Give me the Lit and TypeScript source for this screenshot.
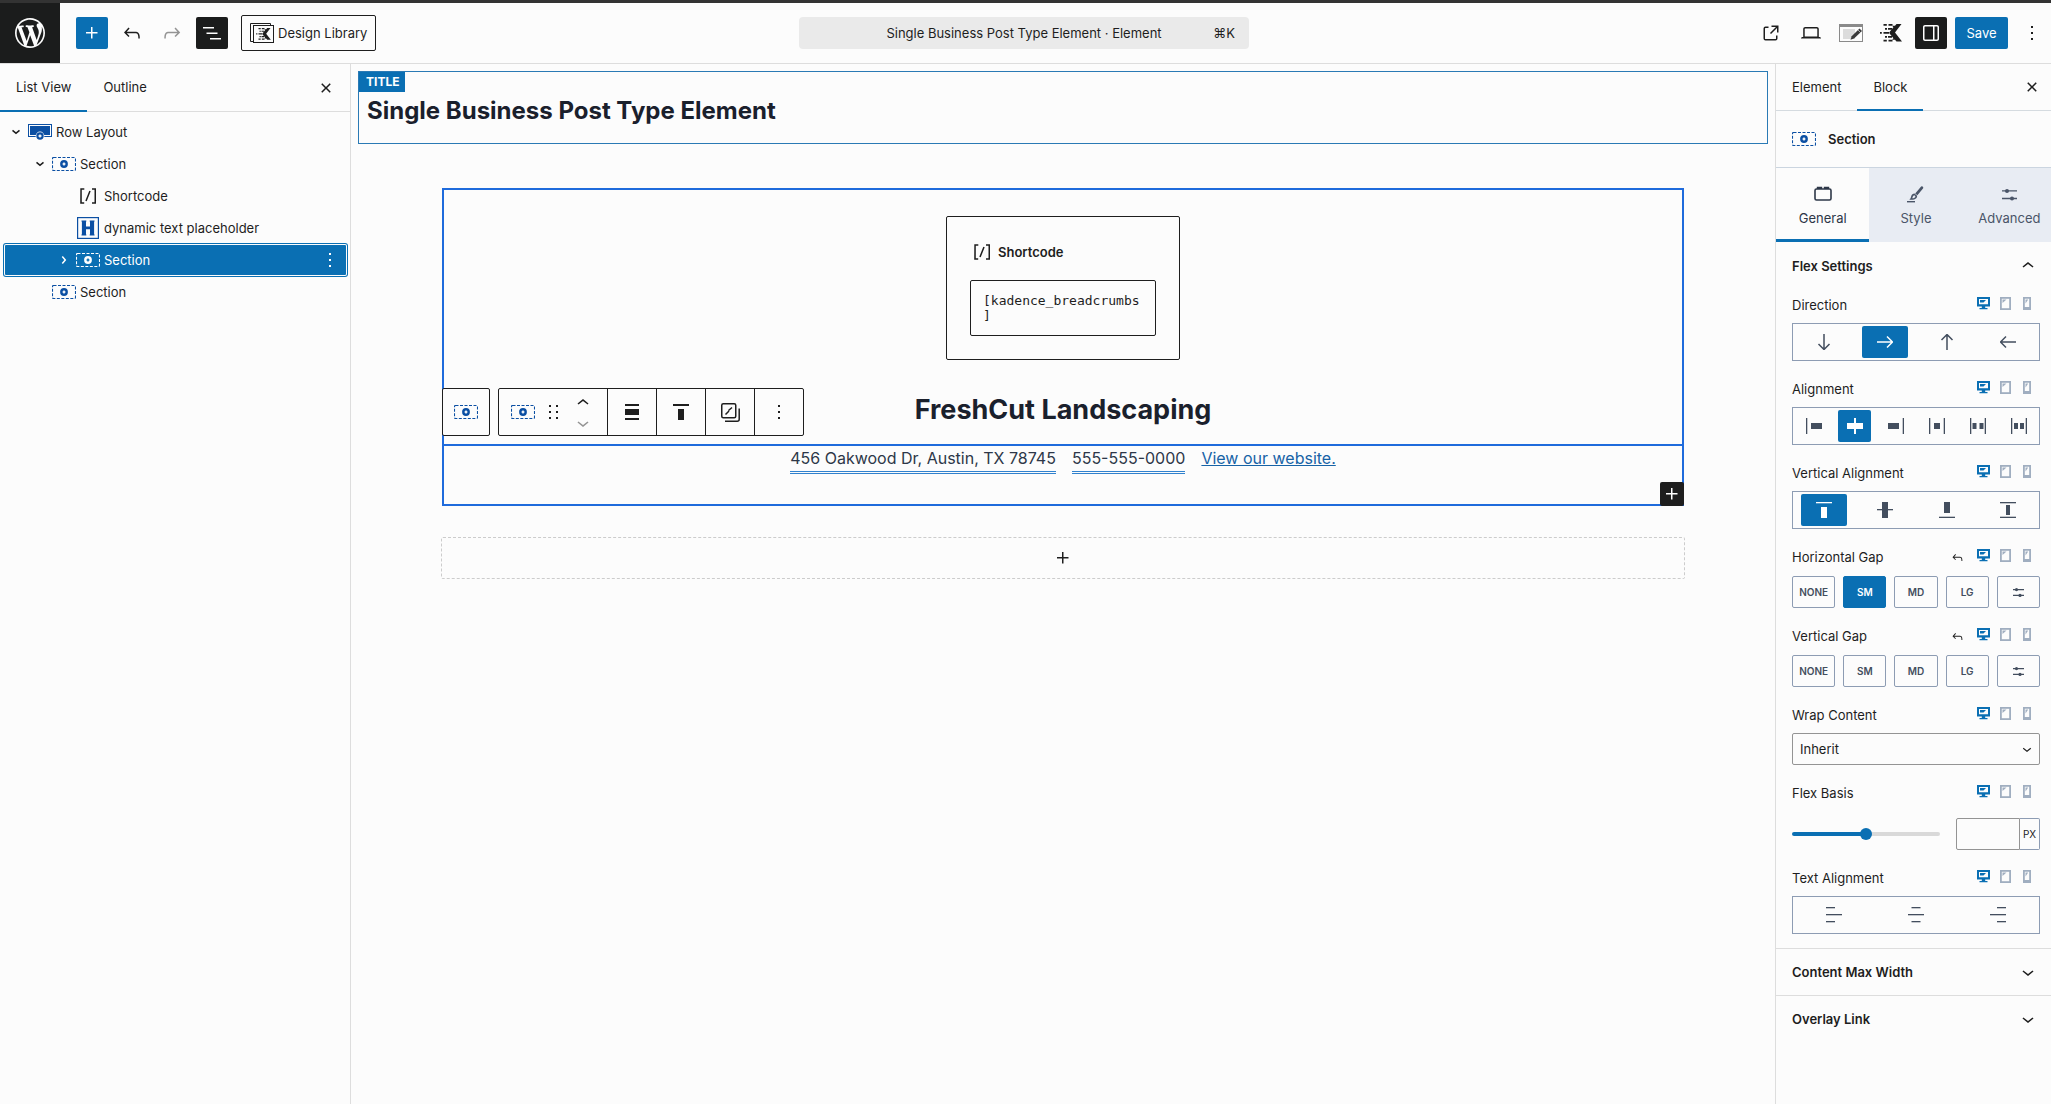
import { LitElement, html, css, svg, nothing, TemplateResult, SVGTemplateResult } from 'lit';
import { customElement, property, state } from 'lit/decorators.js';
import { classMap } from 'lit/directives/class-map.js';

const icon = (body: SVGTemplateResult, w = 24, h = w, box = `0 0 ${w} ${h}`): TemplateResult =>
  html`<svg width=${w} height=${h} viewBox=${box} fill="currentColor" aria-hidden="true">${body}</svg>`;
const path = (d: string) => svg`<path d=${d}></path>`;
const rect = (x: number, y: number, w: number, h: number) => svg`<rect x=${x} y=${y} width=${w} height=${h}></rect>`;

const wordpress = icon(
  path(
    'M20 10c0-5.51-4.49-10-10-10C4.48 0 0 4.49 0 10c0 5.52 4.48 10 10 10 5.51 0 10-4.48 10-10zM7.78 15.37L4.37 6.22c.55-.02 1.17-.08 1.17-.08.5-.06.44-1.13-.06-1.11 0 0-1.45.11-2.37.11-.18 0-.37 0-.58-.01C4.12 2.69 6.87 1.11 10 1.11c2.33 0 4.45.87 6.05 2.34-.68-.11-1.65.39-1.65 1.58 0 .74.45 1.36.9 2.1.35.61.55 1.36.55 2.46 0 1.49-1.4 5-1.4 5l-3.03-8.37c.54-.02.82-.17.82-.17.5-.05.44-1.25-.06-1.22 0 0-1.44.12-2.38.12-.87 0-2.33-.12-2.33-.12-.5-.03-.56 1.2-.06 1.22l.92.08 1.26 3.41zM17.41 10c.24-.64.74-1.87.43-4.25.7 1.29 1.05 2.71 1.05 4.25 0 3.29-1.73 6.24-4.4 7.78.97-2.59 1.94-5.2 2.92-7.78zM6.1 18.09C3.12 16.65 1.11 13.53 1.11 10c0-1.3.23-2.48.72-3.59C3.25 10.3 4.67 14.2 6.1 18.09zm4.03-6.63l2.58 6.98c-.86.29-1.76.45-2.71.45-.79 0-1.57-.11-2.29-.33.81-2.38 1.62-4.74 2.42-7.1z'
  ),
  36,
  36,
  '-2 -2 24 24'
);
const plus = icon(path('M11 12.5V17.5H12.5V12.5H17.5V11H12.5V6H11V11H6V12.5H11Z'));
const undoPath = path(
  'M18.3 11.7c-.6-.6-1.4-.9-2.3-.9H6.7l2.9-3.3-1.1-1-4.5 5L8.5 16l1-1-2.7-2.7H16c.5 0 .9.2 1.3.5 1 1 1 3.4 1 4.5v.3h1.5v-.2c0-1.5 0-4.3-1.5-5.7z'
);
const undo = icon(undoPath);
const undoSmall = icon(undoPath, 15, 15, '0 0 24 24');
const redo = icon(
  path(
    'M15.6 6.5l-1.1 1 2.9 3.3H8c-.9 0-1.7.3-2.3.9-1.4 1.5-1.4 4.2-1.4 5.6v.2h1.5v-.3c0-1.1 0-3.5 1-4.5.3-.3.7-.5 1.3-.5h9.2L14.5 15l1.1 1.1 4.6-4.6-4.6-5z'
  )
);
const listView = icon(path('M3 6h11v1.5H3V6Zm3.5 5.5h11V13h-11v-1.5ZM21 17H10v1.5h11V17Z'));
const external = icon(
  path(
    'M19.5 4.5h-7V6h4.44l-5.97 5.97 1.06 1.06L18 7.06v4.44h1.5v-7Zm-13 1a2 2 0 0 0-2 2v10a2 2 0 0 0 2 2h10a2 2 0 0 0 2-2v-3H17v3a.5.5 0 0 1-.5.5h-10a.5.5 0 0 1-.5-.5v-10a.5.5 0 0 1 .5-.5h3V5.5h-3Z'
  )
);
const laptop = icon(
  path(
    'M20.5 16h-.7V8c0-1.1-.9-2-2-2H6.2c-1.1 0-2 .9-2 2v8h-.7c-.8 0-1.5.7-1.5 1.5h20c0-.8-.7-1.5-1.5-1.5zM5.7 8c0-.3.2-.5.5-.5h11.6c.3 0 .5.2.5.5v7.6H5.7V8z'
  )
);
const drawer = icon(
  path(
    'M18 4H6c-1.1 0-2 .9-2 2v12c0 1.1.9 2 2 2h12c1.1 0 2-.9 2-2V6c0-1.1-.9-2-2-2zm-4 14.5H6c-.3 0-.5-.2-.5-.5V6c0-.3.2-.5.5-.5h8v13zm4.5-.5c0 .3-.2.5-.5.5h-2.5v-13H18c.3 0 .5.2.5.5v12z'
  )
);
const dots = icon(path('M13 19h-2v-2h2v2zm0-6h-2v-2h2v2zm0-6h-2V5h2v2z'));
const close = icon(
  path(
    'M12 13.06l3.712 3.713 1.061-1.06L13.061 12l3.712-3.712-1.06-1.06L12 10.938 8.288 7.227l-1.061 1.06L10.939 12l-3.712 3.712 1.06 1.061L12 13.061z'
  )
);
const chevronDown = icon(path('M17.5 11.6L12 16l-5.5-4.4.9-1.2L12 14l4.5-3.6 1 1.2z'));
const chevronUp = icon(path('M6.5 12.4L12 8l5.5 4.4-.9 1.2L12 10l-4.5 3.6-1-1.2z'));
const selectChevron = icon(path('M17.5 11.6L12 16l-5.5-4.4.9-1.2L12 14l4.5-3.6 1 1.2z'), 18, 18, '0 0 24 24');
const chevronRightSmall = icon(
  path('M10.86 8.04L14.28 12.03L10.86 16.02L9.72 15.04L12.3 12.03L9.72 9.02L10.86 8.04Z')
);
const chevronDownSmall = icon(path('M15.99 10.89L12 14.3L8.01 10.89L8.99 9.75L12 12.33L15.01 9.75L15.99 10.89Z'));
const shortcode = icon(
  path(
    'M16 4.2v1.5h2.5v12.5H16v1.5h4V4.2h-4zM4.2 19.8h4v-1.5H5.8V5.8h2.5V4.2h-4l-.1 15.6zm5.1-3.1l1.4.6 4-10-1.4-.6-4 10z'
  )
);

const kadenceMark = svg`
  <path d="M21.500 0l-6.500 8.600L22 17.500h-5.500l-1.500-1.700h-2.800l1.200-1.600-4-5V8.300l4-5L12.200 1.700H15L16.500 0z"></path>
  <path d="M8.500 0h4v1.700h-4zM3.500 0h3.300v1.700H3.500zM5 4h2v1.700H5zM8 4h4v1.700H8zM0 8h1.800v1.700H0zM3.500 8H9v1.700H3.500zM5 12h2v1.700H5zM8 12h4v1.700H8zM3.500 15.800h3.300v1.700H3.500zM8.500 15.800h4v1.700h-4z"></path>`;
const kadence = icon(kadenceMark, 22, 18);
const library = icon(
  svg`<g fill="none" stroke="#1e1e1e"><path d="M3 18.500H.5V.5h20V3"></path><rect x="3.500" y="2.500" width="20" height="17"></rect></g>
    <svg x="6" y="5" width="15" height="12" viewBox="0 0 22 18">${kadenceMark}</svg>`,
  24,
  20
);
const template = icon(
  svg`<rect x=".5" y=".5" width="23" height="17" fill="#fcfcfc" stroke="#8a8a8a"></rect>
    <rect x="0" y="0" width="24" height="3" fill="#8a8a8a"></rect>
    <rect x="4" y="5" width="12" height="10" fill="#dcdcdc"></rect>
    <path d="M20.500 4.500l2.500 2.500-8 7.500-3.500 1.300 1.200-3.500z" fill="#3a3a3a"></path>
    <path d="M19 6l2.500 2.500" stroke="#fcfcfc" stroke-width=".6"></path>`,
  24,
  18
);

const section = icon(
  svg`<rect x=".5" y=".5" width="23" height="13" rx="1" fill="none" stroke="currentColor" stroke-width="1.100" stroke-dasharray="3 1.500"></rect>
    <circle cx="12" cy="7" r="3.900"></circle>
    <path d="M12 5.600v2.800M10.600 7h2.800" class="hole"></path>`,
  24,
  14
);
const rowLayout = icon(
  svg`<rect x=".5" y=".5" width="23" height="12" fill="#fcfcfc" stroke="currentColor"></rect>
    <rect x="2" y="2" width="20" height="9"></rect>
    <circle cx="12" cy="12" r="4.400" fill="#fcfcfc"></circle><circle cx="12" cy="12" r="3.700"></circle>
    <path d="M12 10.500v3M10.500 12h3" class="hole"></path>`,
  24,
  16
);
const headingIcon = icon(
  svg`<rect x=".6" y=".6" width="20.800" height="20.800" fill="none" stroke="currentColor" stroke-width="1.200"></rect>
    <path d="M4.500 3.500h4.800v1L9 4.800v4.700h4V4.800l-.3-.3v-1h4.800v1l-.4.3v12.400l.4.3v1h-4.800v-1l.3-.3v-4.900H9v4.900l.3.3v1H4.500v-1l.4-.3V4.800l-.4-.3z"></path>`,
  22
);

const blocksIcon = icon(
  svg`<rect x="1" y="3" width="16" height="11" rx="1.500" fill="none" stroke="currentColor" stroke-width="1.600"></rect>
    <path d="M3.500 3V1.500h4V3M10.500 3V1.500h4V3" fill="currentColor" stroke="currentColor" stroke-width="1.400"></path>`,
  18,
  16
);
const brush = icon(
  svg`<path d="M15.500 .6c.9.500 1 1.200.5 2L10.400 9.200 8.200 7.400 13.700.9c.5-.6 1.200-.7 1.800-.3z"></path>
    <path d="M7.500 7.600l2.600 2.200c.2 2.200-1.400 4-5.600 4-1 0-1.700-.2-2.200-.6 1.500-.4 1.400-1.400 1.900-3 .5-1.500 1.700-2.600 3.300-2.600zm-.2 1.600c-1.600.3-1.500 1.700-2 3.100 1.800 0 2.900-.7 3.100-2.100z" fill-rule="evenodd"></path>
    <rect x="0" y="15" width="8" height="1.400"></rect>`,
  17
);
const sliders = icon(
  svg`<path d="M0 3.200h15v1.400H0zM0 10.800h15v1.400H0z"></path><circle cx="5" cy="3.900" r="2"></circle><circle cx="10" cy="11.500" r="2"></circle>`,
  15,
  15
);
const slidersSmall = icon(
  svg`<path d="M0 2h11v1.200H0zM0 7.800h11V9H0z"></path><circle cx="3.500" cy="2.600" r="1.600"></circle><circle cx="7" cy="8.400" r="1.600"></circle>`,
  11
);

const arrow = (deg: number) =>
  icon(
    svg`<g transform="rotate(${deg} 8 8)" fill="none" stroke="currentColor" stroke-width="1.500"><path d="M0 8h15.500M10 2.500L15.500 8 10 13.500"></path></g>`,
    16
  );
const bar = 1.3;
const far = 16 - bar;
const hIcons = [
  icon(svg`${rect(0, 0, bar, 16)}${rect(5, 5, 11, 6)}`, 16),
  icon(svg`${rect(0, 5, 16, 6)}${rect(7, 0, 2, 16)}`, 16),
  icon(svg`${rect(far, 0, bar, 16)}${rect(0, 5, 11, 6)}`, 16),
  icon(svg`${rect(0, 0, bar, 16)}${rect(far, 0, bar, 16)}${rect(5, 5, 6, 6)}`, 16),
  icon(svg`${rect(0, 0, bar, 16)}${rect(far, 0, bar, 16)}${rect(2.5, 5, 4, 6)}${rect(9.5, 5, 4, 6)}`, 16),
  icon(svg`${rect(0, 0, bar, 16)}${rect(far, 0, bar, 16)}${rect(3, 5, 4, 6)}${rect(9, 5, 4, 6)}`, 16),
];
const vIcons = [
  icon(svg`${rect(0, 0, 16, bar)}${rect(5, 5, 6, 11)}`, 16),
  icon(svg`${rect(5, 0, 6, 16)}${rect(0, 7, 16, bar)}`, 16),
  icon(svg`${rect(0, far, 16, bar)}${rect(5, 0, 6, 11)}`, 16),
  icon(svg`${rect(0, 0, 16, bar)}${rect(0, far, 16, bar)}${rect(6, 3, 4, 10)}`, 16),
];
const tIcons = [
  icon(svg`${rect(0, 0, 9, bar)}${rect(0, 7, 16, bar)}${rect(0, 14, 9, bar)}`, 16),
  icon(svg`${rect(3.5, 0, 9, bar)}${rect(0, 7, 16, bar)}${rect(3.5, 14, 9, bar)}`, 16),
  icon(svg`${rect(7, 0, 9, bar)}${rect(0, 7, 16, bar)}${rect(7, 14, 9, bar)}`, 16),
];

const desktop = icon(
  svg`<path d="M0 0h13v9.500H8.200V11h2.300v1.200h-8V11h2.300V9.500H0zM2 2v5.200h9V2z" fill-rule="evenodd"></path>
    <path d="M3 3h6L6.500 5.500H3z"></path>`,
  13,
  13
);
const tablet = icon(
  svg`<rect x=".9" y=".9" width="9.200" height="11.200" fill="none" stroke="currentColor" stroke-width="1.800"></rect><path d="M2.500 2.500h4l-4 3.500z"></path>`,
  11,
  13
);
const mobile = icon(
  svg`<path d="M0 0h8v13H0zM1.800 1.800v8.200h4.400V1.800z" fill-rule="evenodd"></path><path d="M2.500 2.500h2.700l-2.700 4z"></path>`,
  8,
  13
);

const toolAlign = icon(svg`${rect(0, 0, 14, 2)}${rect(0, 5, 14, 6)}${rect(0, 14, 14, 2)}`, 14, 16);
const toolTop = icon(svg`${rect(0, 0, 16, 2)}${rect(5, 5, 6, 11)}`, 16);
const toolCopy = icon(
  svg`<g fill="none" stroke="currentColor" stroke-width="1.500"><rect x=".75" y=".75" width="14" height="14" rx="1.500"></rect>
    <path d="M18.200 5.500v10.700a2 2 0 0 1-2 2H4M4.500 11.500L8 8M7.500 7.500L11 4.500"></path></g>`,
  19
);
const drag = icon(
  svg`${rect(0, 0, 2, 2)}${rect(7, 0, 2, 2)}${rect(0, 6, 2, 2)}${rect(7, 6, 2, 2)}${rect(0, 12, 2, 2)}${rect(7, 12, 2, 2)}`,
  9,
  14
);

const reset = css`
  * {
    box-sizing: border-box;
  }
  button,
  input,
  select,
  textarea {
    margin: 0;
    padding: 0;
    border: 0;
    background: none;
    color: inherit;
    font: inherit;
  }
  button {
    display: inline-flex;
    align-items: center;
    justify-content: center;
    cursor: pointer;
  }
  svg {
    display: block;
    flex: none;
  }
  .hole {
    fill: none;
    stroke: #fcfcfc;
    stroke-width: 1.4;
  }
`;

interface TreeItem {
  label: string;
  depth: number;
  glyph: TemplateResult;
  open?: boolean;
  plain?: boolean;
}

@customElement('editor-header')
export class EditorHeader extends LitElement {
  static styles = [
    reset,
    css`
      :host {
        display: flex;
        align-items: center;
        height: 64px;
        border-top: 3px solid #333;
        border-bottom: 1px solid #ddd;
      }
      .logo {
        display: flex;
        align-items: center;
        justify-content: center;
        width: 60px;
        height: 60px;
        margin-right: 8px;
        background: #1b1c1c;
        color: #fcfcfc;
      }
      .group {
        display: flex;
        flex: 1;
        align-items: center;
        gap: 8px;
      }
      .end {
        justify-content: flex-end;
        padding-right: 3px;
      }
      .tool {
        width: 32px;
        height: 32px;
        border-radius: 2px;
      }
      .primary {
        background: #0a6fb3;
        color: #fff;
      }
      .dark {
        background: #1b1c1c;
        color: #fff;
      }
      .muted {
        color: #949494;
      }
      .library {
        gap: 4px;
        height: 36px;
        margin-left: 5px;
        padding: 0 8px;
        border: 1px solid #1e1e1e;
        border-radius: 2px;
      }
      .command {
        display: grid;
        grid-template-columns: 1fr auto 1fr;
        width: 450px;
        height: 32px;
        padding: 0 14px;
        border-radius: 4px;
        background: #eaeaea;
      }
      .keys {
        grid-column: 3;
        justify-self: end;
      }
      .name {
        grid-column: 2;
      }
      .save {
        width: 53px;
        height: 32px;
        border-radius: 2px;
      }
    `,
  ];

  render() {
    return html`
      <div class="group">
        <a class="logo" href="#dashboard" aria-label="View dashboard">${wordpress}</a>
        <button class="tool primary" aria-label="Add block">${plus}</button>
        <button class="tool" aria-label="Undo">${undo}</button>
        <button class="tool muted" aria-label="Redo">${redo}</button>
        <button class="tool dark" aria-label="Document overview">${listView}</button>
        <button class="library">${library}Design Library</button>
      </div>
      <button class="command">
        <span class="name">Single Business Post Type Element · Element</span><span class="keys">⌘K</span>
      </button>
      <div class="group end">
        <button class="tool" aria-label="View post">${external}</button>
        <button class="tool" aria-label="Preview">${laptop}</button>
        <button class="tool" aria-label="Page template">${template}</button>
        <button class="tool" aria-label="Kadence">${kadence}</button>
        <button class="tool dark" aria-label="Settings">${drawer}</button>
        <button class="save primary">Save</button>
        <button class="tool" aria-label="Options">${dots}</button>
      </div>
    `;
  }
}

@customElement('list-view')
export class ListView extends LitElement {
  @state() private selected = 4;

  private items: TreeItem[] = [
    { label: 'Row Layout', depth: 0, glyph: rowLayout, open: true },
    { label: 'Section', depth: 1, glyph: section, open: true },
    { label: 'Shortcode', depth: 2, glyph: shortcode, plain: true },
    { label: 'dynamic text placeholder', depth: 2, glyph: headingIcon },
    { label: 'Section', depth: 2, glyph: section, open: false },
    { label: 'Section', depth: 1, glyph: section },
  ];

  static styles = [
    reset,
    css`
      :host {
        display: block;
        border-right: 1px solid #ddd;
      }
      .tabs {
        display: flex;
        height: 48px;
        padding-right: 8px;
        border-bottom: 1px solid #ddd;
      }
      .tab {
        height: 48px;
        padding: 0 16px;
        border-bottom: 2px solid transparent;
      }
      .tab.active {
        border-color: #0a6fb3;
      }
      .close {
        width: 32px;
        margin-left: auto;
      }
      .tree {
        margin: 0;
        padding: 4px 3px 4px 4px;
        list-style: none;
      }
      .row {
        display: flex;
        align-items: center;
        height: 32px;
        border-radius: 2px;
      }
      .row.selected {
        background: #0a6fb3;
        color: #fff;
        box-shadow: inset 0 0 0 1px #fcfcfc, 0 0 0 1px #0a6fb3;
      }
      .row.selected .hole {
        stroke: #0a6fb3;
      }
      .indent-1 {
        padding-left: 24px;
      }
      .indent-2 {
        padding-left: 48px;
      }
      .entry {
        flex: 1;
        justify-content: flex-start;
        height: 32px;
      }
      .twisty {
        display: flex;
        width: 24px;
      }
      .glyph {
        display: flex;
        justify-content: center;
        width: 24px;
        margin-right: 4px;
        color: #0b4fa3;
      }
      .glyph.plain,
      .selected .glyph {
        color: inherit;
      }
      .more {
        width: 34px;
        height: 32px;
      }
    `,
  ];

  render() {
    return html`
      <div class="tabs" role="tablist">
        <button class="tab active" role="tab" aria-selected="true">List View</button>
        <button class="tab" role="tab" aria-selected="false">Outline</button>
        <button class="close" aria-label="Close">${close}</button>
      </div>
      <ul class="tree">
        ${this.items.map(
          (item, i) => html`
            <li class=${classMap({ row: true, selected: i === this.selected, [`indent-${item.depth}`]: true })}>
              <button class="entry" @click=${() => (this.selected = i)}>
                <span class="twisty">
                  ${item.open === undefined ? nothing : item.open ? chevronDownSmall : chevronRightSmall}
                </span>
                <span class=${classMap({ glyph: true, plain: !!item.plain })}>${item.glyph}</span>${item.label}
              </button>
              ${i === this.selected ? html`<button class="more" aria-label="Options">${dots}</button>` : nothing}
            </li>
          `
        )}
      </ul>
    `;
  }
}

@customElement('block-canvas')
export class BlockCanvas extends LitElement {
  static styles = [
    reset,
    css`
      :host {
        display: block;
        padding: 7px;
        min-width: 0;
        color: #1a202c;
      }
      .title {
        height: 73px;
        border: 1px solid #2a7ab5;
      }
      .tag {
        display: block;
        width: max-content;
        padding: 0 6px 0 7px;
        background: #0a6fb3;
        color: #fff;
        font-size: 12px;
        font-weight: 700;
        line-height: 20px;
      }
      h1 {
        margin: 0;
        padding-left: 8px;
        font-size: 24px;
        font-weight: 700;
        line-height: 38px;
      }
      .layout {
        position: relative;
        display: flex;
        flex-direction: column;
        align-items: center;
        max-width: 1242px;
        margin: 44px auto 0;
        padding-top: 26px;
        border: 2px solid #1f6bdc;
      }
      .shortcode {
        width: 234px;
        padding: 23px;
        border: 1px solid #1e1e1e;
        border-radius: 2px;
        color: #1e1e1e;
      }
      .caption {
        display: flex;
        align-items: center;
        gap: 4px;
        height: 24px;
        margin-bottom: 16px;
        font-size: 13px;
        font-weight: 600;
      }
      textarea {
        display: block;
        width: 100%;
        height: 56px;
        padding: 12px;
        border: 1px solid #1e1e1e;
        border-radius: 2px;
        font: 13px/15px 'DejaVu Sans Mono', monospace;
        overflow: hidden;
        resize: none;
      }
      h2 {
        margin: 32px 0 16px;
        font-size: 27px;
        font-weight: 700;
        line-height: 36px;
      }
      .details {
        display: flex;
        align-self: stretch;
        align-items: flex-start;
        justify-content: center;
        gap: 16px;
        padding-bottom: 30px;
        border-top: 2px solid #1f6bdc;
        font-size: 16px;
        line-height: 24px;
        color: #2d3748;
      }
      .dynamic {
        padding-bottom: 1px;
        border-bottom: 3px double #3182ce;
      }
      .details a {
        color: #1763a6;
      }
      .toolbar {
        position: absolute;
        top: 198px;
        left: -2px;
        display: flex;
        gap: 8px;
        color: #1e1e1e;
      }
      .bar {
        display: flex;
        height: 48px;
        border: 1px solid #1e1e1e;
        border-radius: 2px;
        background: #fcfcfc;
      }
      .bar > * + * {
        border-left: 1px solid #1e1e1e;
      }
      .cell {
        width: 49px;
      }
      .only {
        width: 46px;
      }
      .cluster {
        display: flex;
        align-items: stretch;
        padding: 0 6px;
      }
      .type {
        width: 36px;
      }
      .kadence {
        color: #0b4fa3;
      }
      .handle {
        width: 24px;
      }
      .movers {
        display: flex;
        flex-direction: column;
        width: 36px;
        padding: 4px 0 2px;
      }
      .movers button {
        height: 20px;
      }
      .movers button:last-child {
        color: #949494;
      }
      .add {
        position: absolute;
        right: -2px;
        bottom: -2px;
        width: 24px;
        height: 24px;
        border-radius: 2px;
        background: #1e1e1e;
        color: #fff;
      }
      .appender {
        display: flex;
        width: 100%;
        max-width: 1244px;
        height: 42px;
        margin: 31px auto 0;
        border: 1px dashed #ccc;
        border-radius: 2px;
        color: #1e1e1e;
      }
    `,
  ];

  render() {
    return html`
      <div class="title">
        <span class="tag">TITLE</span>
        <h1>Single Business Post Type Element</h1>
      </div>
      <div class="layout">
        <div class="shortcode">
          <label class="caption" for="shortcode">${shortcode}Shortcode</label>
          <textarea id="shortcode" .value=${'[kadence_breadcrumbs]'}></textarea>
        </div>
        <h2>FreshCut Landscaping</h2>
        <div class="details">
          <span class="dynamic">456 Oakwood Dr, Austin, TX 78745</span>
          <span class="dynamic">555-555-0000</span>
          <a href="#website">View our website.</a>
        </div>
        <div class="toolbar" role="toolbar" aria-label="Block tools">
          <div class="bar"><button class="only kadence" aria-label="Select parent block">${section}</button></div>
          <div class="bar">
            <div class="cluster">
              <button class="type kadence" aria-label="Section">${section}</button>
              <button class="handle" aria-label="Drag">${drag}</button>
              <span class="movers">
                <button aria-label="Move up">${chevronUp}</button>
                <button aria-label="Move down">${chevronDown}</button>
              </span>
            </div>
            <button class="cell" aria-label="Align">${toolAlign}</button>
            <button class="cell" aria-label="Align top">${toolTop}</button>
            <button class="cell" aria-label="Copy styles">${toolCopy}</button>
            <button class="cell" aria-label="Options">${dots}</button>
          </div>
        </div>
        <button class="add" aria-label="Add block">${plus}</button>
      </div>
      <button class="appender" aria-label="Add block">${plus}</button>
    `;
  }
}

@customElement('choice-bar')
export class ChoiceBar extends LitElement {
  @property({ attribute: false }) options: TemplateResult[] = [];
  @property({ type: Number }) value = -1;
  @property() name = '';

  static styles = [
    reset,
    css`
      :host {
        display: grid;
        grid-auto-flow: column;
        grid-auto-columns: 1fr;
        place-items: center;
        height: 38px;
        border: 1px solid #8d9cb3;
        color: #434e5e;
      }
      button {
        width: 46px;
        height: 32px;
        border-radius: 2px;
      }
      button.small {
        width: 33px;
      }
      button.on {
        background: #0a6fb3;
        color: #fff;
      }
    `,
  ];

  render() {
    return this.options.map(
      (option, i) => html`<button
        class=${classMap({ on: i === this.value, small: this.options.length > 4 })}
        aria-label="${this.name} ${i + 1}"
        aria-pressed=${i === this.value}
        @click=${() => (this.value = i)}
      >
        ${option}
      </button>`
    );
  }
}

@customElement('block-settings')
export class BlockSettings extends LitElement {
  static styles = [
    reset,
    css`
      :host {
        display: block;
        border-left: 1px solid #ddd;
        overflow: hidden;
      }
      .tabs {
        display: flex;
        height: 47px;
        padding-right: 3px;
        border-bottom: 1px solid #d5dbe0;
      }
      .tab {
        height: 47px;
        padding: 0 16px;
        border-bottom: 2px solid transparent;
      }
      .tab.active {
        border-color: #0a6fb3;
      }
      .close {
        width: 32px;
        margin-left: auto;
      }
      .panel {
        width: 280px;
      }
      .block {
        display: flex;
        align-items: center;
        gap: 12px;
        height: 57px;
        padding: 0 16px;
        border-bottom: 1px solid #cbd5e0;
        font-weight: 600;
      }
      .block svg {
        color: #0b4fa3;
      }
      .modes {
        display: grid;
        grid-template-columns: repeat(3, 1fr);
        height: 74px;
        background: #e8ecf3;
        color: #4a5568;
      }
      .mode {
        flex-direction: column;
        justify-content: flex-start;
        gap: 4px;
        padding-top: 16px;
      }
      .mode .art {
        display: flex;
        align-items: center;
        height: 20px;
      }
      .mode.active {
        border-bottom: 3px solid #0a6fb3;
        background: #fcfcfc;
        color: #2d3748;
      }
      .fold {
        display: flex;
        justify-content: space-between;
        width: 100%;
        height: 48px;
        padding: 0 0 0 16px;
        font-weight: 600;
      }
      .fold svg {
        margin-right: 16px;
      }
      .fold.ruled {
        border-top: 1px solid #ddd;
        height: 47px;
      }
      .controls {
        display: flex;
        flex-direction: column;
        gap: 18px;
        padding: 5px 16px 14px;
      }
      .control {
        display: flex;
        flex-direction: column;
        gap: 8px;
      }
      .control.roomy {
        gap: 9px;
      }
      .control.wide {
        gap: 15px;
      }
      .head {
        display: flex;
        align-items: center;
        height: 20px;
        padding-right: 9px;
      }
      .head label,
      .head .label {
        flex: 1;
      }
      .devices {
        display: flex;
        align-self: flex-start;
        gap: 10px;
        padding-top: 2px;
        color: #a0aec0;
      }
      .devices button:last-child {
        width: 10px;
        justify-content: flex-end;
      }
      .devices .on {
        color: #0a6fb3;
      }
      .undo {
        margin-right: 12px;
      }
      .sizes {
        display: grid;
        grid-template-columns: repeat(5, 1fr);
        gap: 8px;
        height: 32px;
        color: #434e5e;
        font-size: 10px;
        font-weight: 600;
      }
      .size {
        border: 1px solid #8d9cb3;
        border-radius: 2px;
      }
      .size.on {
        border-color: #0a6fb3;
        background: #0a6fb3;
        color: #fff;
      }
      .select {
        display: grid;
        align-items: center;
      }
      .select select,
      .select svg {
        grid-area: 1 / 1;
      }
      .select svg {
        justify-self: end;
        margin-right: 4px;
        pointer-events: none;
      }
      select {
        appearance: none;
        height: 32px;
        padding-left: 7px;
        border: 1px solid #949494;
        border-radius: 2px;
      }
      .range {
        display: flex;
        align-items: center;
        gap: 16px;
        height: 32px;
      }
      input[type='range'] {
        appearance: none;
        flex: 1;
        min-width: 0;
        height: 4px;
        border-radius: 2px;
        background: linear-gradient(to right, #0a6fb3 50%, #d9d9d9 50%);
      }
      input[type='range']::-webkit-slider-thumb {
        appearance: none;
        width: 12px;
        height: 12px;
        border-radius: 50%;
        background: #0a6fb3;
      }
      .measure {
        display: flex;
        width: 84px;
        height: 32px;
      }
      .measure input {
        flex: 1;
        min-width: 0;
        padding: 0 8px;
        border: 1px solid #949494;
        border-radius: 2px 0 0 2px;
      }
      .unit {
        width: 20px;
        border: 1px solid #8d9cb3;
        border-left: 0;
        border-radius: 0 2px 2px 0;
        font-size: 10px;
      }
    `,
  ];

  private head(text: string, undoable = false, target = '') {
    return html`<div class="head">
      ${target ? html`<label for=${target}>${text}</label>` : html`<span class="label">${text}</span>`}
      ${undoable ? html`<button class="undo" aria-label="Reset ${text}">${undoSmall}</button>` : nothing}
      <span class="devices">
        <button class="on" aria-label="Desktop">${desktop}</button>
        <button aria-label="Tablet">${tablet}</button>
        <button aria-label="Mobile">${mobile}</button>
      </span>
    </div>`;
  }

  private choices(text: string, options: TemplateResult[], value: number) {
    return html`<div class="control">
      ${this.head(text)}
      <choice-bar role="group" .name=${text} .options=${options} .value=${value}></choice-bar>
    </div>`;
  }

  private gap(text: string, value: string) {
    return html`<div class="control roomy">
      ${this.head(text, true)}
      <div class="sizes" role="group" aria-label=${text}>
        ${['NONE', 'SM', 'MD', 'LG'].map(
          (s) => html`<button class=${classMap({ size: true, on: s === value })}>${s}</button>`
        )}
        <button class="size" aria-label="Custom">${slidersSmall}</button>
      </div>
    </div>`;
  }

  render() {
    return html`
      <div class="tabs" role="tablist">
        <button class="tab" role="tab" aria-selected="false">Element</button>
        <button class="tab active" role="tab" aria-selected="true">Block</button>
        <button class="close" aria-label="Close">${close}</button>
      </div>
      <div class="panel">
        <div class="block">${section}Section</div>
        <div class="modes">
          <button class="mode active"><span class="art">${blocksIcon}</span>General</button>
          <button class="mode"><span class="art">${brush}</span>Style</button>
          <button class="mode"><span class="art">${sliders}</span>Advanced</button>
        </div>
        <button class="fold" aria-expanded="true">Flex Settings${chevronUp}</button>
        <div class="controls">
          ${this.choices('Direction', [arrow(90), arrow(0), arrow(-90), arrow(180)], 1)}
          ${this.choices('Alignment', hIcons, 1)} ${this.choices('Vertical Alignment', vIcons, 0)}
          ${this.gap('Horizontal Gap', 'SM')} ${this.gap('Vertical Gap', '')}
          <div class="control">
            ${this.head('Wrap Content', false, 'wrap')}
            <div class="select">
              <select id="wrap">
                <option>Inherit</option>
              </select>
              ${selectChevron}
            </div>
          </div>
          <div class="control wide">
            ${this.head('Flex Basis', false, 'basis')}
            <div class="range">
              <input id="basis" type="range" min="0" max="100" value="50" />
              <span class="measure">
                <input type="text" aria-label="Flex Basis value" /><button class="unit">PX</button>
              </span>
            </div>
          </div>
          ${this.choices('Text Alignment', tIcons, -1)}
        </div>
        <button class="fold ruled" aria-expanded="false">Content Max Width${chevronDown}</button>
        <button class="fold ruled" aria-expanded="false">Overlay Link${chevronDown}</button>
      </div>
    `;
  }
}

@customElement('app-root')
export class AppRoot extends LitElement {
  static styles = css`
    :host {
      display: grid;
      grid-template-columns: 351px minmax(0, 1fr) 276px;
      grid-template-rows: auto 1fr;
      min-height: 100vh;
      background: #fcfcfc;
      color: #1e1e1e;
      font: 13px/20px Inter, 'Liberation Sans', sans-serif;
    }
    editor-header {
      box-sizing: border-box;
      grid-column: 1 / -1;
    }
  `;

  render() {
    return html`
      <editor-header></editor-header>
      <list-view></list-view>
      <block-canvas></block-canvas>
      <block-settings></block-settings>
    `;
  }
}
